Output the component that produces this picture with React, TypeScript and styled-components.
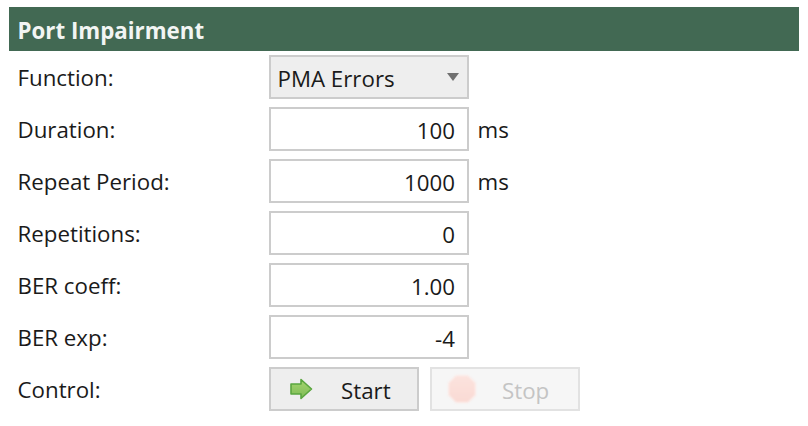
import React from 'react';
import styled, { createGlobalStyle } from 'styled-components';

const GlobalStyle = createGlobalStyle`
  html, body {
    margin: 0;
    background: #fff;
  }
`;

const fields = [
  { label: 'Duration:', value: '100', unit: 'ms' },
  { label: 'Repeat Period:', value: '1000', unit: 'ms' },
  { label: 'Repetitions:', value: '0' },
  { label: 'BER coeff:', value: '1.00' },
  { label: 'BER exp:', value: '-4' },
];

const App: React.FC = () => {
  return (
    <Page>
      <GlobalStyle />
      <Header>Port Impairment</Header>
      <Form>
        <Row>
          <Label>Function:</Label>
          <Select>
            PMA Errors
            <Caret />
          </Select>
        </Row>
        {fields.map((f) => (
          <Row key={f.label}>
            <Label>{f.label}</Label>
            <Input>{f.value}</Input>
            {f.unit && <Unit>{f.unit}</Unit>}
          </Row>
        ))}
        <Row>
          <Label>Control:</Label>
          <Buttons>
            <Button>
              <IconSlot>
                <svg width="24" height="24" viewBox="0 0 24 24" style={{ filter: 'blur(0.5px)' }}>
                  <defs>
                    <linearGradient id="startFill" x1="0" y1="0" x2="0" y2="1">
                      <stop offset="0" stopColor="#a5d46f" />
                      <stop offset="1" stopColor="#7dbb55" />
                    </linearGradient>
                  </defs>
                  <path d="M2 7h10V2.500L22.500 12 12 21.500V17H2z" fill="url(#startFill)" stroke="#5aa63f" strokeWidth="1.6" strokeLinejoin="round" />
                </svg>
              </IconSlot>
              <ButtonText>Start</ButtonText>
            </Button>
            <Button $disabled>
              <IconSlot>
                <svg width="30" height="30" viewBox="0 0 30 30" style={{ filter: 'blur(0.8px)' }}>
                  <defs>
                    <linearGradient id="stopFill" x1="0" y1="0" x2="0" y2="1">
                      <stop offset="0" stopColor="#fce3de" />
                      <stop offset="1" stopColor="#fadad4" />
                    </linearGradient>
                  </defs>
                  <path d="M9 1.500h12L28.500 9v12L21 28.500H9L1.500 21V9z" fill="url(#stopFill)" stroke="#fdeeeb" strokeWidth="1" />
                </svg>
              </IconSlot>
              <ButtonText>Stop</ButtonText>
            </Button>
          </Buttons>
        </Row>
      </Form>
    </Page>
  );
};

export default App;

const Page = styled.div`
  width: 808px;
  height: 426px;
  box-sizing: border-box;
  padding: 7px 9px 0;
  font-family: 'Open Sans', 'Noto Sans', sans-serif;
  font-size: 22.3px;
  color: #1a1a1a;
`;

const Header = styled.div`
  height: 44px;
  line-height: 47px;
  padding-left: 8.500px;
  background: #426953;
  color: #f2f5f3;
  font-size: 22.3px;
  font-weight: 700;
`;

const Form = styled.div`
  display: flex;
  flex-direction: column;
  gap: 8px;
  padding-top: 4px;
`;

const Row = styled.div`
  display: flex;
  align-items: center;
  height: 44px;
`;

const Label = styled.div`
  width: 260px;
  padding: 1px 0 0 8.500px;
  box-sizing: border-box;
`;

const Select = styled.div`
  position: relative;
  width: 200px;
  height: 44px;
  box-sizing: border-box;
  border: 2px solid #cccccc;
  background: #eeeeee;
  padding-left: 6.500px;
  line-height: 43px;
`;

const Caret = styled.span`
  position: absolute;
  right: 8px;
  top: 16px;
  border-left: 6px solid transparent;
  border-right: 6px solid transparent;
  border-top: 8px solid #707070;
`;

const Input = styled.div`
  width: 200px;
  height: 44px;
  box-sizing: border-box;
  border: 2px solid #cccccc;
  background: #fff;
  padding-right: 12px;
  text-align: right;
  line-height: 43px;
`;

const Unit = styled.span`
  margin: 1px 0 0 8.500px;
`;

const Buttons = styled.div`
  display: flex;
  gap: 11px;
`;

const Button = styled.div<{ $disabled?: boolean }>`
  display: flex;
  align-items: center;
  width: 150px;
  height: 44px;
  box-sizing: border-box;
  border: 2px solid ${(p) => (p.$disabled ? '#e2e2e2' : '#cccccc')};
  background: ${(p) => (p.$disabled ? '#f6f6f6' : '#eeeeee')};
  color: ${(p) => (p.$disabled ? '#c4c4c4' : '#1a1a1a')};
`;

const IconSlot = styled.div`
  display: flex;
  justify-content: center;
  width: 60px;
`;

const ButtonText = styled.span`
  margin: 2px 0 0 10px;
`;
